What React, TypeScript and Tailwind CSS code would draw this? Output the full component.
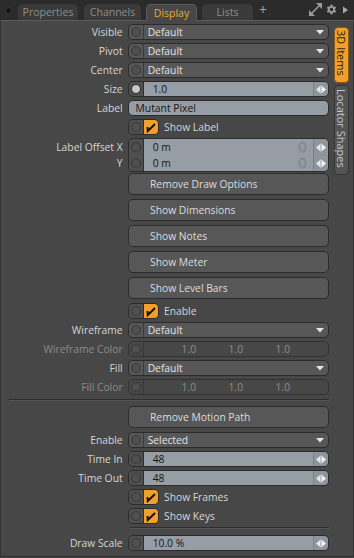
import React from "react";

function Circle({ filled }: { filled?: boolean }) {
  return filled ? (
    <div className="w-[10px] h-[10px] rounded-full bg-[#c8c8c8] border border-[#2a2a2a]" />
  ) : (
    <div className="w-[10px] h-[10px] rounded-full bg-[#4f4f4f] border border-[#383838]" />
  );
}

function Stepper() {
  return (
    <div className="w-[15px] h-full flex items-center justify-center border-l border-[#7c828a] bg-[#8f959d]">
      <svg width="10" height="9" viewBox="0 0 10 9">
        <path d="M0 4.5 L4 1 L4 8 Z" fill="#e8e8e8" />
        <rect x="4.5" y="0.5" width="1" height="8" fill="#f4f4f4" />
        <path d="M10 4.5 L6 1 L6 8 Z" fill="#f4f4f4" />
      </svg>
    </div>
  );
}

function Arrow() {
  return (
    <svg width="8" height="5" viewBox="0 0 8 5">
      <path d="M0 0 L8 0 L4 4.5 Z" fill="#e4e4e4" />
    </svg>
  );
}

function Row({
  label,
  disabled,
  mt,
  children,
}: {
  label?: string;
  disabled?: boolean;
  mt: string;
  children: React.ReactNode;
}) {
  return (
    <div className={"flex items-center h-[16px] " + mt}>
      <div
        className={
          "w-[127px] pr-[5px] text-right whitespace-nowrap leading-[16px] " +
          (disabled ? "text-[#8c8c8c]" : "text-[#d6d6d6]")
        }
      >
        {label}
      </div>
      {children}
    </div>
  );
}

function Dropdown({ value }: { value: string }) {
  return (
    <div className="w-[202px] h-[16px] rounded-[5px] border border-[#2b2b2b] bg-[#575757] flex items-stretch overflow-hidden">
      <div className="w-[15px] flex items-center justify-center border-r border-[#3a3a3a]">
        <Circle />
      </div>
      <div className="flex-1 pl-[4px] text-[#e2e2e2] leading-[14px]">{value}</div>
      <div className="w-[14px] flex items-center justify-center pr-[2px]">
        <Arrow />
      </div>
    </div>
  );
}

function Numeric({ value, filled }: { value: string; filled?: boolean }) {
  return (
    <div className="w-[202px] h-[16px] rounded-[5px] border border-[#2b2b2b] flex items-stretch overflow-hidden">
      <div className="w-[15px] flex items-center justify-center bg-[#4f4f4f] border-r border-[#2f2f2f]">
        <Circle filled={filled} />
      </div>
      <div className="flex-1 pl-[9px] bg-[#979da5] text-[#151515] leading-[14px]">{value}</div>
      <Stepper />
    </div>
  );
}

function Check({ label, mt }: { label: string; mt: string }) {
  return (
    <Row mt={mt}>
      <div className="w-[31px] h-[16px] rounded-[5px] border border-[#2b2b2b] flex items-stretch overflow-hidden">
        <div className="w-[15px] flex items-center justify-center bg-[#4f4f4f] border-r border-[#2f2f2f]">
          <Circle />
        </div>
        <div className="flex-1 bg-[#f2a02a] flex items-center justify-center">
          <svg width="12" height="12" viewBox="0 0 12 12">
            <path d="M2.5 6 L2.8 10 L10 3" fill="none" stroke="#111" strokeWidth="2" strokeLinejoin="miter" />
          </svg>
        </div>
      </div>
      <div className="ml-[5px] text-[#d6d6d6] leading-[16px] whitespace-nowrap">{label}</div>
    </Row>
  );
}

function Button({ label, mt }: { label: string; mt: string }) {
  return (
    <div className={"flex h-[22px] " + mt}>
      <div className="ml-[127px] w-[202px] h-[22px] rounded-[5px] border border-[#2c2c2c] bg-[#575757] pl-[21px] text-[#dcdcdc] leading-[20px] whitespace-nowrap">
        {label}
      </div>
    </div>
  );
}

function ColorField() {
  return (
    <div className="w-[202px] h-[16px] rounded-[5px] border border-[#323232] flex items-stretch overflow-hidden">
      <div className="w-[15px] flex items-center justify-center border-r border-[#383838]">
        <Circle />
      </div>
      <div className="flex-1 flex justify-center text-[#8c8c8c] leading-[14px]">
        <div className="w-[47px] text-center">1.0</div>
        <div className="w-[47px] text-center">1.0</div>
        <div className="w-[47px] text-center">1.0</div>
      </div>
    </div>
  );
}

function OffsetBlock() {
  const Ring = () => (
    <svg width="9" height="12" viewBox="0 0 9 12" className="mr-[6px]">
      <ellipse cx="4.5" cy="6" rx="3" ry="4.5" fill="none" stroke="#868c94" strokeWidth="2.4" />
    </svg>
  );
  const Line = ({ v }: { v: string }) => (
    <div className="h-[16px] flex items-stretch">
      <div className="w-[15px] flex items-center justify-center bg-[#4f4f4f] border-r border-[#2f2f2f]">
        <Circle />
      </div>
      <div className="flex-1 pl-[9px] bg-[#979da5] text-[#151515] leading-[16px] flex items-center justify-between">
        <span>{v}</span>
        <Ring />
      </div>
      <Stepper />
    </div>
  );
  return (
    <div className="flex mt-[3px]">
      <div className="w-[127px] pr-[5px] text-right text-[#d6d6d6] whitespace-nowrap">
        <div className="leading-[16px] mt-[1px]">Label Offset X</div>
        <div className="leading-[16px]">Y</div>
      </div>
      <div className="w-[202px] h-[34px] rounded-[5px] border border-[#2b2b2b] overflow-hidden flex flex-col">
        <Line v="0 m" />
        <Line v="0 m" />
      </div>
    </div>
  );
}

export default function App() {
  return (
    <div className="w-[354px] h-[558px] bg-[#474747] font-['Open_Sans','Liberation_Sans',sans-serif] text-[10.3px] overflow-hidden">
      {/* Tab bar */}
      <div className="h-[20px] bg-[#2b2b2b] flex items-end relative">
        <div className="ml-[5px] mb-[6px] w-[7px] h-[7px] rounded-full bg-[#141414] border border-[#3a3a3a]" />
        <div className="ml-[6px] w-[60px] h-[16px] rounded-t-[5px] bg-[#3a3a3a] text-[#8e8e8e] text-[10.5px] leading-[16px] text-center">
          Properties
        </div>
        <div className="ml-[6px] w-[57px] h-[16px] rounded-t-[5px] bg-[#3a3a3a] text-[#8e8e8e] text-[10.5px] leading-[16px] text-center">
          Channels
        </div>
        <div className="ml-[5px] w-[51px] h-[17px] -mb-px relative z-10 rounded-t-[5px] bg-[#474747] border-t border-l border-r border-[#5c5c5c] text-[#f5a526] text-[10.5px] leading-[16px] text-center">
          Display
        </div>
        <div className="ml-[5px] w-[51px] h-[16px] rounded-t-[5px] bg-[#3a3a3a] text-[#8e8e8e] text-[10.5px] leading-[16px] text-center">
          Lists
        </div>
        <div className="ml-[6px] mb-[2px] text-[#a0a0a0] text-[14px] leading-[16px]">+</div>
        <div className="flex-1" />
        <div className="mb-[4px] flex items-center">
          <svg width="13" height="13" viewBox="0 0 13 13">
            <path d="M13 0 L13 6 L7 0 Z" fill="#9a9a9a" />
            <path d="M0 13 L0 7 L6 13 Z" fill="#9a9a9a" />
            <path d="M2.5 10.5 L10.5 2.5" stroke="#9a9a9a" strokeWidth="1.6" />
          </svg>
          <svg width="13" height="13" viewBox="0 0 24 24" className="ml-[3px]">
            <path
              fill="#9a9a9a"
              d="M19.4 13a7.5 7.5 0 0 0 0-2l2.1-1.6-2-3.5-2.5 1a7.6 7.6 0 0 0-1.7-1L15 3.3h-4l-.4 2.6a7.6 7.6 0 0 0-1.7 1l-2.5-1-2 3.5L6.5 11a7.5 7.5 0 0 0 0 2l-2.1 1.6 2 3.5 2.5-1a7.6 7.6 0 0 0 1.7 1l.4 2.6h4l.4-2.6a7.6 7.6 0 0 0 1.7-1l2.5 1 2-3.5zM13 15.2a3.2 3.2 0 1 1 0-6.4 3.2 3.2 0 0 1 0 6.4z"
              transform="translate(-1 0)"
            />
          </svg>
          <svg width="6" height="8" viewBox="0 0 6 8" className="ml-[5px] mr-[5px]">
            <path d="M0 0.5 L5 4 L0 7.5 Z" fill="#aaaaaa" />
          </svg>
        </div>
      </div>

      {/* Panel */}
      <div className="h-[537px] border-t border-[#5c5c5c] border-l border-r border-b border-l-[#333333] border-r-[#333333] border-b-[#2f2f2f] flex">
        <div className="w-[328px] flex flex-col">
          <Row label="Visible" mt="mt-[3px]">
            <Dropdown value="Default" />
          </Row>
          <Row label="Pivot" mt="mt-[3px]">
            <Dropdown value="Default" />
          </Row>
          <Row label="Center" mt="mt-[3px]">
            <Dropdown value="Default" />
          </Row>
          <Row label="Size" mt="mt-[3px]">
            <Numeric value="1.0" filled />
          </Row>
          <Row label="Label" mt="mt-[3px]">
            <div className="w-[202px] h-[16px] rounded-[5px] border border-[#2b2b2b] bg-[#979da5] pl-[7px] text-[#151515] leading-[14px]">
              Mutant Pixel
            </div>
          </Row>
          <Check label="Show Label" mt="mt-[3px]" />
          <OffsetBlock />
          <Button label="Remove Draw Options" mt="mt-[1px]" />
          <Button label="Show Dimensions" mt="mt-[4px]" />
          <Button label="Show Notes" mt="mt-[4px]" />
          <Button label="Show Meter" mt="mt-[4px]" />
          <Button label="Show Level Bars" mt="mt-[4px]" />
          <Check label="Enable" mt="mt-[4px]" />
          <Row label="Wireframe" mt="mt-[3px]">
            <Dropdown value="Default" />
          </Row>
          <Row label="Wireframe Color" disabled mt="mt-[3px]">
            <ColorField />
          </Row>
          <Row label="Fill" mt="mt-[3px]">
            <Dropdown value="Default" />
          </Row>
          <Row label="Fill Color" disabled mt="mt-[3px]">
            <ColorField />
          </Row>
          <div className="mt-[4px] ml-[8px] w-[320px] h-[2px] border-t border-[#2e2e2e] border-b border-b-[#555555]" />
          <Button label="Remove Motion Path" mt="mt-[5px]" />
          <Row label="Enable" mt="mt-[4px]">
            <Dropdown value="Selected" />
          </Row>
          <Row label="Time In" mt="mt-[3px]">
            <Numeric value="48" />
          </Row>
          <Row label="Time Out" mt="mt-[3px]">
            <Numeric value="48" />
          </Row>
          <Check label="Show Frames" mt="mt-[3px]" />
          <Check label="Show Keys" mt="mt-[3px]" />
          <div className="mt-[3px] ml-[129px] w-[199px] h-[2px] border-t border-[#2e2e2e] border-b border-b-[#555555]" />
          <Row label="Draw Scale" mt="mt-[6px]">
            <Numeric value="10.0 %" />
          </Row>
        </div>
        <div className="ml-[5px] w-[15px] pt-[6px] flex flex-col">
          <div className="h-[56px] rounded-[4px] bg-[#f2a02a] border border-[#8a5a14] flex flex-col items-center pt-[2px]">
            <span className="[writing-mode:vertical-rl] text-[11px] leading-[13px] text-[#1c1c1c] whitespace-nowrap">
              3D Items
            </span>
          </div>
          <div className="mt-[2px] h-[90px] rounded-[4px] bg-[#545454] border border-[#343434] flex flex-col items-center pt-[3px]">
            <span className="[writing-mode:vertical-rl] text-[11px] leading-[13px] text-[#c6c6c6] whitespace-nowrap">
              Locator Shapes
            </span>
          </div>
        </div>
      </div>
    </div>
  );
}
